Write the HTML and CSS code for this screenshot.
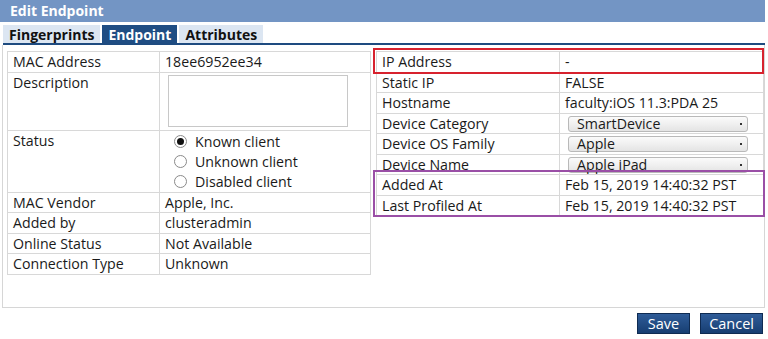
FILE: index.html
```html
<!DOCTYPE html>
<html>
<head>
<meta charset="utf-8">
<link rel="stylesheet" href="styles.css">
</head>
<body>
<div class="dialog">
  <div class="title">Edit Endpoint</div>
  <div class="tabs">
    <div class="tab">Fingerprints</div>
    <div class="tab active">Endpoint</div>
    <div class="tab">Attributes</div>
  </div>
  <div class="panel">
    <table class="grid left">
      <tr><td class="k">MAC Address</td><td>18ee6952ee34</td></tr>
      <tr class="desc"><td class="k">Description</td><td><div class="textarea"></div></td></tr>
      <tr class="status"><td class="k">Status</td><td>
        <div class="radio"><span class="dot on"></span>Known client</div>
        <div class="radio"><span class="dot"></span>Unknown client</div>
        <div class="radio"><span class="dot"></span>Disabled client</div>
      </td></tr>
      <tr><td class="k">MAC Vendor</td><td>Apple, Inc.</td></tr>
      <tr><td class="k">Added by</td><td>clusteradmin</td></tr>
      <tr><td class="k">Online Status</td><td>Not Available</td></tr>
      <tr><td class="k">Connection Type</td><td>Unknown</td></tr>
    </table>
    <div class="rightwrap">
      <table class="grid right">
        <tr><td class="k">IP Address</td><td>-</td></tr>
        <tr><td class="k">Static IP</td><td>FALSE</td></tr>
        <tr><td class="k">Hostname</td><td>faculty:iOS 11.3:PDA 25</td></tr>
        <tr><td class="k">Device Category</td><td><div class="select">SmartDevice<span class="arrow"></span></div></td></tr>
        <tr><td class="k">Device OS Family</td><td><div class="select">Apple<span class="arrow"></span></div></td></tr>
        <tr><td class="k">Device Name</td><td><div class="select">Apple iPad<span class="arrow"></span></div></td></tr>
        <tr><td class="k">Added At</td><td>Feb 15, 2019 14:40:32 PST</td></tr>
        <tr><td class="k">Last Profiled At</td><td>Feb 15, 2019 14:40:32 PST</td></tr>
      </table>
      <div class="mark red"></div>
      <div class="mark purple"></div>
    </div>
  </div>
  <div class="actions">
    <button class="btn save">Save</button>
    <button class="btn">Cancel</button>
  </div>
</div>
</body>
</html>
```
FILE: styles.css
```css
html, body { margin: 0; padding: 0; background: #fff; }
body { font-family: "Open Sans", "Noto Sans", sans-serif; font-size: 14.2px; color: #1a1a1a; }
.dialog { width: 768px; height: 339px; }
.title {
  height: 22px; margin-right: 3px; background: #7395c4; color: #fff;
  font-weight: bold; font-size: 14px; line-height: 22px; padding-left: 10px;
}
.tabs {
  display: flex; gap: 2px; margin: 3px 3px 0 3px;
  border-bottom: 2px solid #1e4b80;
}
.tab {
  height: 18px; line-height: 19px; padding: 0 6px; background: #dce6f2;
  font-weight: bold; font-size: 14px; color: #111;
}
.tab.active { background: #1f4d83; color: #fff; }
.panel {
  display: flex; align-items: flex-start; margin: 0 3px 0 2px; height: 263px;
  border: 1px solid #d6d6d6; border-top: none; padding: 6px 0 0 4px; box-sizing: border-box;
}
.grid { border-collapse: collapse; }
.grid td {
  border: 1px solid #d8d8d8; padding: 0 5px; line-height: 19.5px;
  vertical-align: top; white-space: nowrap;
}
.left { width: 364px; }
.left td.k { width: 141px; }
.textarea {
  width: 180px; height: 52px; margin: 2px 0 3px 3px; border: 1px solid #c8c8c8; box-sizing: border-box;
}
.status td { padding-top: 1px; padding-bottom: 0; }
.status td.k { padding-top: 0; }
.radio { display: flex; align-items: center; height: 20px; line-height: 20px; padding-left: 9px; }
.dot {
  width: 13px; height: 13px; border: 1px solid #8a8a8a; border-radius: 50%; box-sizing: border-box;
  margin-right: 8px; display: flex; align-items: center; justify-content: center; background: #fff;
}
.dot.on::after { content: ""; width: 7px; height: 7px; border-radius: 50%; background: #111; }
.rightwrap { position: relative; margin-left: 5px; }
.right { width: 388px; }
.right td.k { width: 172px; }
.select {
  position: relative; width: 180px; height: 16px; line-height: 14px; margin: 2px 0 1.5px 3px;
  border: 1px solid #b9b9b9; border-radius: 3px; box-sizing: border-box; padding-left: 8px;
  background: linear-gradient(#fbfbfb, #e4e4e4);
}
.arrow { position: absolute; right: 5px; top: 6px; width: 2px; height: 2px; background: #333; }
.mark { position: absolute; pointer-events: none; box-sizing: border-box; }
.mark.red { border: 2px solid #d7222e; left: -3px; top: -3px; width: 391px; height: 26px; }
.mark.purple { border: 2px solid #9a4fa6; left: -3px; top: 119px; width: 392px; height: 47px; }
.actions { display: flex; justify-content: flex-end; gap: 10px; margin: 5px 5px 0 0; }
.btn {
  height: 21px; padding: 0 8px; border: 1px solid #0f2b52; color: #fff;
  background: linear-gradient(#2f5c98, #173e72); font-family: "Open Sans", "Noto Sans", sans-serif;
  font-size: 14.5px; line-height: 19px;
}
.btn.save { padding: 0 10px; }
```
